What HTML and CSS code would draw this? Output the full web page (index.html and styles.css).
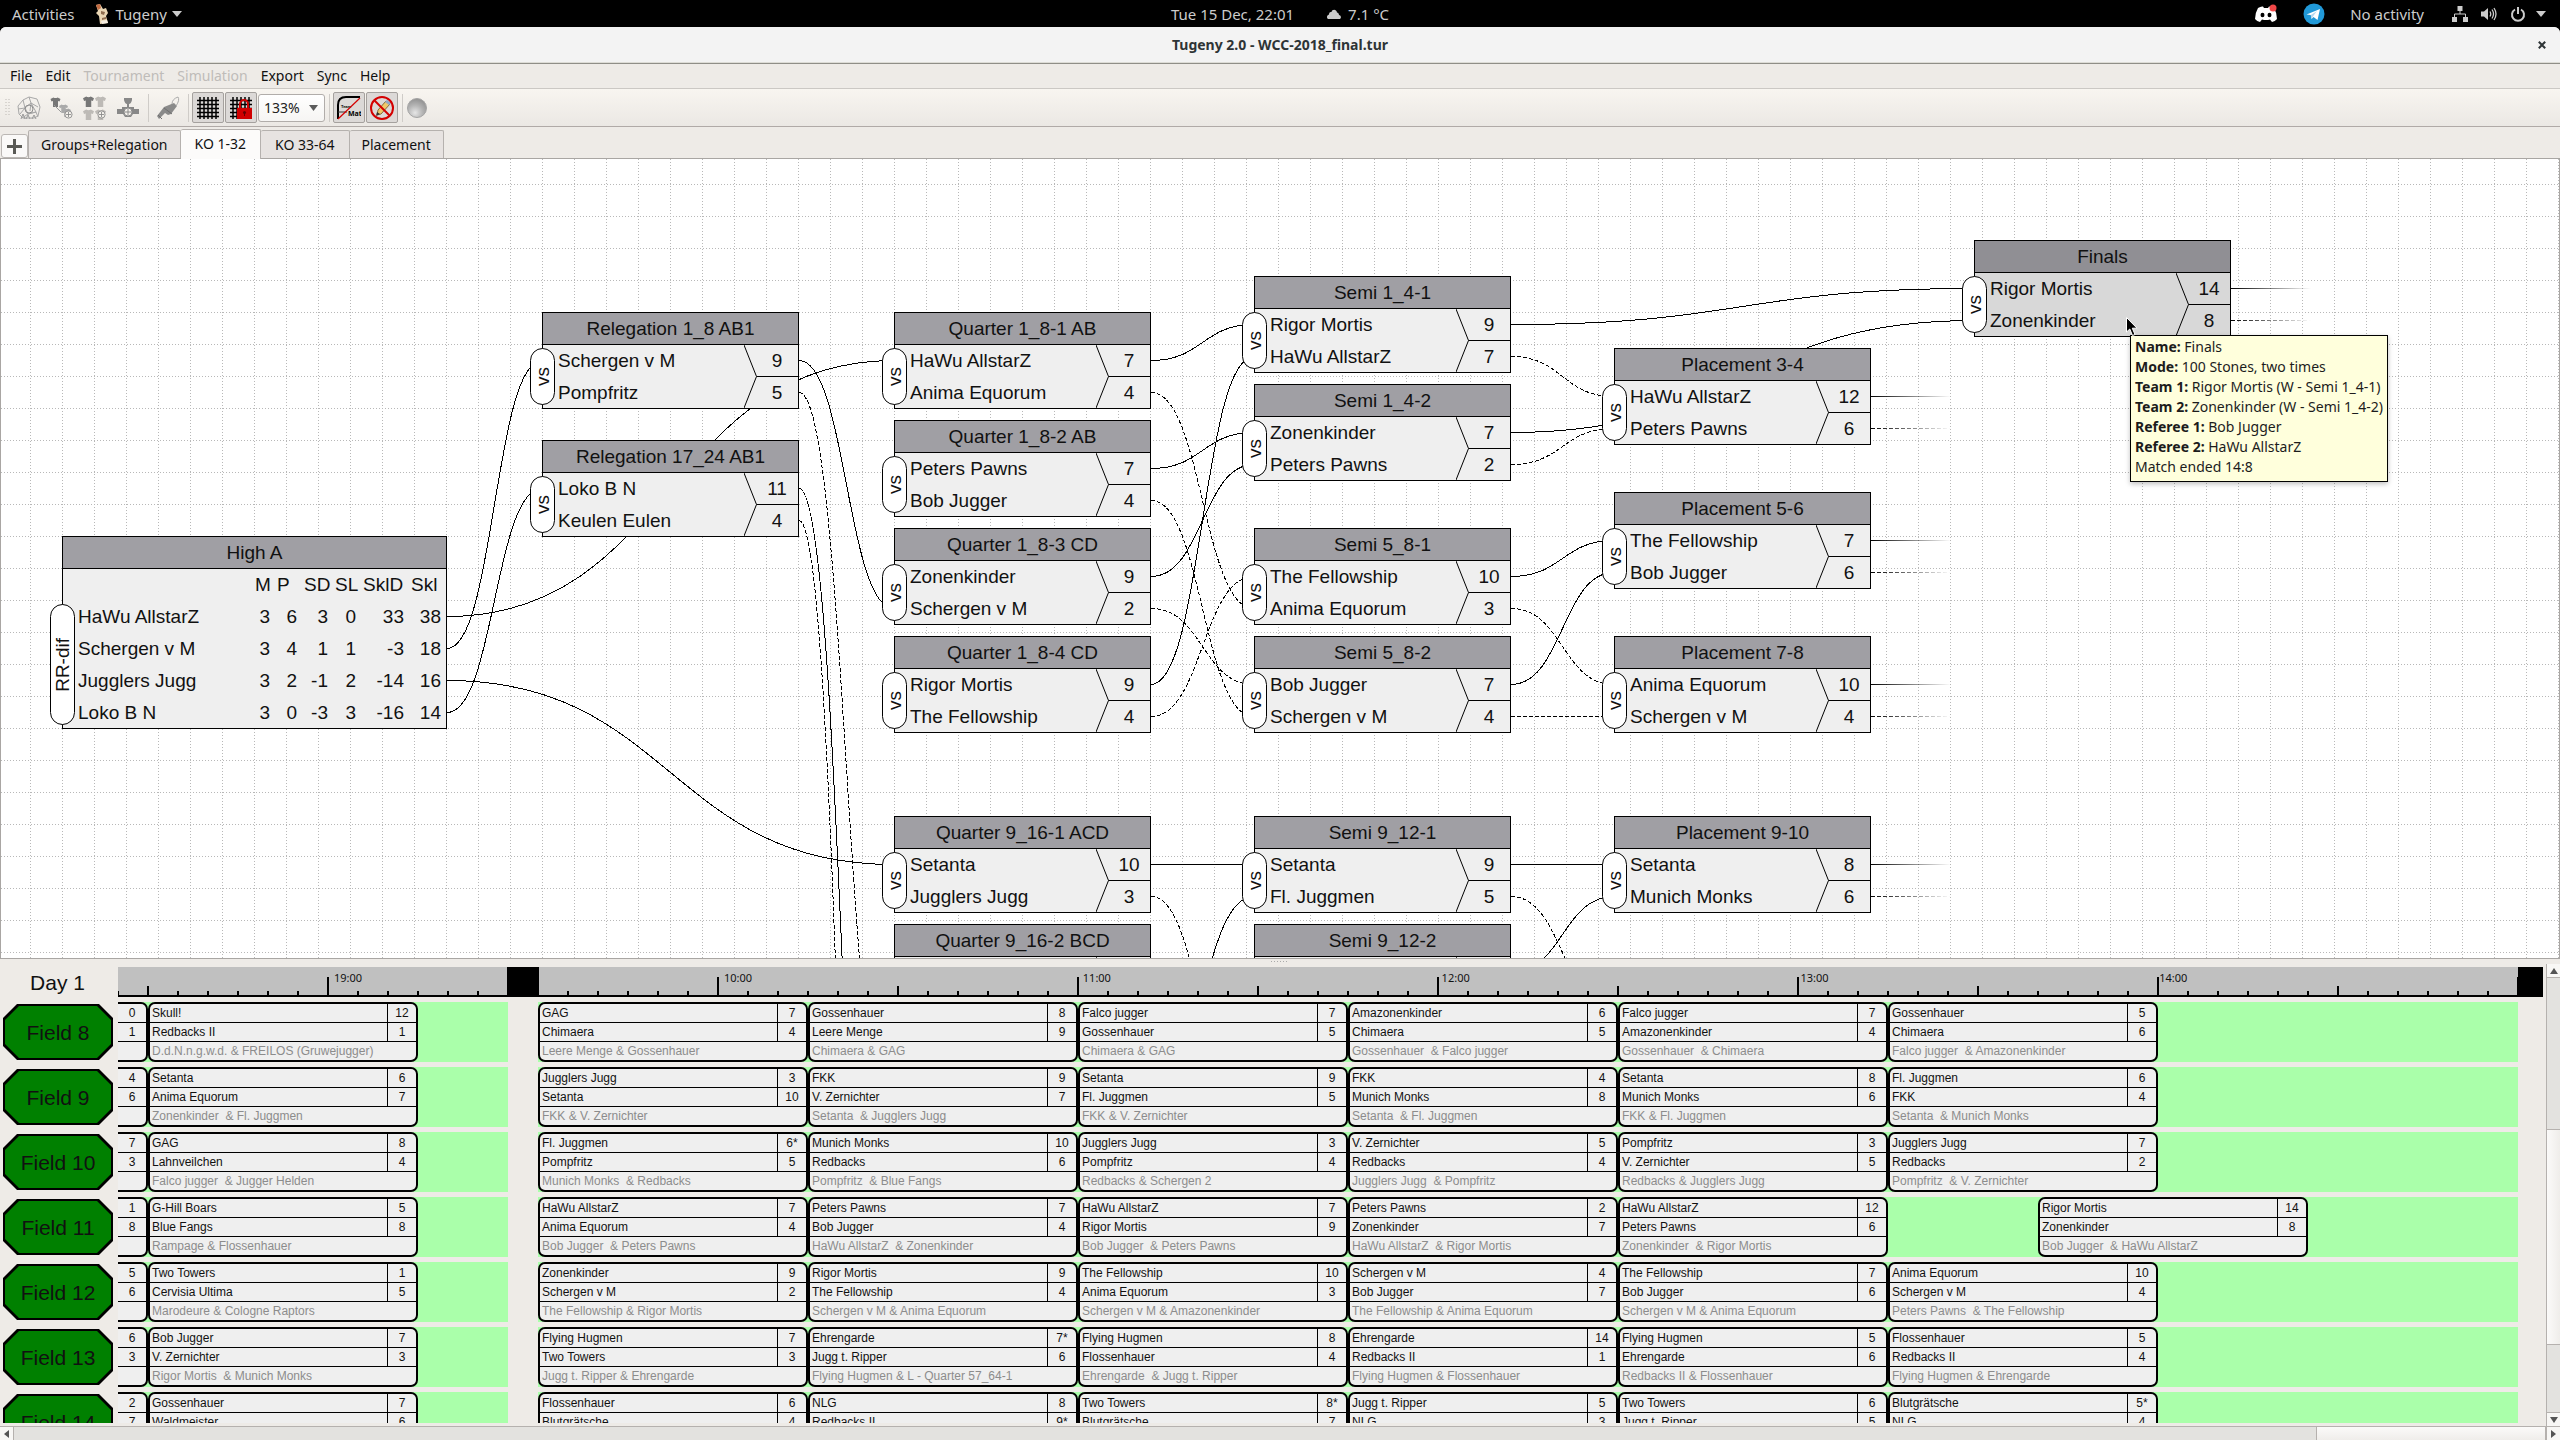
FILE: index.html
```
<!DOCTYPE html>
<html lang="en">
<head>
<meta charset="utf-8">
<title>Tugeny 2.0 - WCC-2018_final.tur</title>
<link rel="stylesheet" href="styles.css">
</head>
<body>
<svg class="defs" width="0" height="0" aria-hidden="true">
  <symbol id="shirt" viewBox="0 0 12 12"><path d="M3.5 0.5 Q6 2 8.500 .5 L12 2.500 10.800 5.500 9 4.800V12H3V4.800L1.200 5.500 0 2.500Z"/></symbol>
  <symbol id="plus-badge" viewBox="0 0 10 10"><circle cx="5" cy="5" r="4" fill="#f4f1ec" stroke="#8c8c8c"/><path d="M5 2v6M2 5h6" stroke="#8c8c8c" fill="none"/></symbol>
  <symbol id="mesh" viewBox="0 0 24 24"><path d="M1 4.500H23M1 8.500H23M1 12.500H23M1 16.500H23M1 20.500H23M4 1V23M8 1V23M12 1V23M16 1V23M20 1V23" stroke="#000" stroke-width="1.500" fill="none"/></symbol>
</svg>

<header class="shell">
  <div class="shell-left">
    <button class="shell-item">Activities</button>
    <button class="shell-item shell-app">
      <svg width="16" height="24" viewBox="0 0 16 24" aria-hidden="true"><path d="M1 3l4-1 3 5 3-1 2 5-2 3 2 7-8 1-1-8-3-3 2-2z" fill="#e9d6b4"/><path d="M1 3l4-1 1 4-3 2z" fill="#c26b42"/><path d="M6 9l4 1-1 3-3-1zM7 16l4-1v2l-4 1z" fill="#8f6d50"/><path d="M6 19l6-1 1 3-6 1z" fill="#f5ede0"/></svg>
      Tugeny
      <svg width="10" height="6" viewBox="0 0 10 6" aria-hidden="true"><path d="M0 0h10L5 6z" fill="#ccc"/></svg>
    </button>
  </div>
  <div class="shell-mid">
    <span>Tue 15 Dec, 22:01</span>
    <span class="weather"><svg width="16" height="12" viewBox="0 0 16 12" aria-hidden="true"><path d="M2 11a2.500 2.500 0 0 1 1-4.500C3 4 5 4 5.500 4 6 1 10.500 1 11 4.500 13 5 13 7 13 7a2.200 2.200 0 0 1 1 4z" fill="#ccc"/></svg>7.1 °C</span>
  </div>
  <div class="shell-right">
    <svg class="discord" width="24" height="24" viewBox="0 0 24 24" aria-label="Discord"><path d="M4 6q3-2 5-1.500L10 6h4l1-1.500q3 0 5 1.500 3 5 3 11-2 2.500-5 3l-2-2.500q-4 1-8 0L6 20q-3-.5-5-3 0-6 3-11z" fill="#fff"/><ellipse cx="8.500" cy="13" rx="2" ry="2.300"/><ellipse cx="15.500" cy="13" rx="2" ry="2.300"/><circle cx="19" cy="6" r="3.500" fill="#f04747"/></svg>
    <svg class="telegram" width="22" height="22" viewBox="0 0 22 22" aria-label="Telegram"><circle cx="11" cy="11" r="10.500" fill="#2199d8"/><path d="M3.500 11.500L17 6l-2.500 11-4-3-2 2-.7-4z" fill="#fff"/><path d="M7.800 12L14 8l-4.500 6-1 2z" fill="#b5d8ee"/></svg>
    <span class="activity">No activity</span>
    <svg class="sys" width="16" height="16" viewBox="0 0 16 16" aria-label="Network"><path d="M5.500 0h5v5h-5zM0 11h5v5H0zM11 11h5v5h-5z" fill="#ccc"/><path d="M8 5v3M2.500 11V8h11v3" stroke="#ccc" fill="none"/></svg>
    <svg class="sys" width="16" height="16" viewBox="0 0 16 16" aria-label="Volume"><path d="M0 5.500h3L7 2v12L3 10.500H0z" fill="#ccc"/><path d="M9 5.500q1.500 2.500 0 5M11 3.500q3 4.500 0 9M13 2q4 6 0 12" stroke="#ccc" stroke-width="1.300" fill="none"/></svg>
    <svg class="sys" width="16" height="16" viewBox="0 0 16 16" aria-label="Power"><path d="M5 3.500a6 6 0 1 0 6 0M8 1v7" stroke="#ccc" stroke-width="2" fill="none"/></svg>
    <svg class="sys-arrow" width="10" height="6" viewBox="0 0 10 6" aria-hidden="true"><path d="M0 0h10L5 6z" fill="#ccc"/></svg>
  </div>
</header>

<div class="window">
  <div class="titlebar">
    <h1>Tugeny 2.0 - WCC-2018_final.tur</h1>
    <button class="close" aria-label="Close"><svg width="8" height="8" viewBox="0 0 8 8"><path d="M.8.8l6.400 6.400M7.200.8L.8 7.200" stroke="#2e3436" stroke-width="2"/></svg></button>
  </div>
  <nav class="menubar">
    <button>File</button><button>Edit</button><button disabled>Tournament</button><button disabled>Simulation</button><button>Export</button><button>Sync</button><button>Help</button>
  </nav>

  <div class="toolbar">
    <svg class="handle" width="7" height="18" viewBox="0 0 7 18" aria-hidden="true"><path d="M1 0v18M4 0v18" stroke="#bdb9b4" stroke-dasharray="1 2"/></svg>
    <button class="tool" aria-label="Tournament graph"><svg width="24" height="24" viewBox="0 0 24 24" fill="none" stroke="#a8a8a8"><path d="M12 1l8 2 3 8-2 9-4 2H6l-4-4-1-8 5-6zM12 1l2 6 7 4M6 4l2 8-7 1M8 12l6-5 5 9-8 2zM5 22l6-4 8-2 2 5M3 18l5-6M14 7l-1 8"/><circle cx="12" cy="13" r="4" stroke="#8c8c8c"/><path d="M4 23l2-5 2 5M9 23l2-4 2 4M15 23l2-4 2 4" stroke="#999"/></svg></button>
    <button class="tool" aria-label="Add ranked teams"><svg width="24" height="24" viewBox="0 0 24 24" fill="#777"><use href="#shirt" width="11" height="10" x="0" y="1"/><g fill="#aaa"><use href="#shirt" width="9" height="9" x="9" y="8"/><use href="#shirt" width="9" height="9" x="12" y="12"/></g><path d="M4 9l7 7" stroke="#999"/><use href="#plus-badge" width="9" height="9" x="14" y="14"/></svg></button>
    <button class="tool" aria-label="Add group"><svg width="24" height="24" viewBox="0 0 24 24"><use href="#shirt" width="11" height="11" x="0" y="0" fill="#777"/><g fill="#bdbab6"><use href="#shirt" width="11" height="11" x="12" y="0"/><use href="#shirt" width="11" height="11" x="0" y="13"/><use href="#shirt" width="11" height="11" x="12" y="13"/></g><use href="#plus-badge" width="9" height="9" x="14" y="14"/></svg></button>
    <button class="tool" aria-label="Add match"><svg width="24" height="24" viewBox="0 0 24 24"><path d="M8 2h8v2q-1 4-3 4v3h5v2h5v5h-6l-2 3H9l-2-3H1v-5h5v-2h5V8Q9 8 8 4z" fill="#888"/><use href="#plus-badge" width="10" height="10" x="7" y="11"/></svg></button>
    <span class="sep"></span>
    <button class="tool" aria-label="Referees"><svg width="24" height="24" viewBox="0 0 24 24"><path d="M1 20l7-9 10-4 3 3-6 8-3 1-3-2-6 6z" fill="#8a8a8a"/><path d="M2 19l4 4M8 12l8 6" stroke="#6f6f6f"/><path d="M16 8q0-5 6-7 2 3-2 9" stroke="#aaa" fill="none"/></svg></button>
    <span class="sep"></span>
    <button class="tool on" aria-label="Show grid"><svg width="24" height="24"><use href="#mesh"/></svg></button>
    <button class="tool on" aria-label="Snap to grid"><svg width="24" height="24" viewBox="0 0 24 24"><use href="#mesh" width="24" height="24"/><path d="M11 12V8a4 4 0 0 1 8 0v4" stroke="#c00" stroke-width="2" fill="none"/><rect x="8" y="12" width="15" height="11" fill="#d00000"/><circle cx="15.500" cy="16.500" r="1.500" fill="#600"/><path d="M15.500 16v4" stroke="#600"/></svg></button>
    <div class="zoom"><select aria-label="Zoom"><option>133%</option></select><svg width="9" height="6" viewBox="0 0 9 6" aria-hidden="true"><path d="M0 0h9L4.500 6z" fill="#5c5c5c"/></svg></div>
    <span class="sep"></span>
    <button class="tool on" aria-label="Match names"><svg width="24" height="24" viewBox="0 0 24 24"><path d="M1 23V9q0-8 8-8h14" stroke="#000" stroke-width="2" fill="none"/><path d="M1 16h9" stroke="#333"/><text x="4" y="12" class="ico-team">Team</text><text x="11" y="20" class="ico-mat">Mat</text><path d="M1 23L23 2" stroke="#d40000" stroke-width="1.200"/></svg></button>
    <button class="tool on" aria-label="Lock editing"><svg width="24" height="24" viewBox="0 0 24 24"><path d="M7 19l1-5 8-9 4 3-9 10z" fill="#f0c869" stroke="#8a6d3b"/><path d="M15 6l2-2 4 3-2 2z" fill="#8fa8c8"/><path d="M6 20l1-4 3 2z" fill="#333"/><circle cx="12" cy="12" r="11" stroke="#d40000" stroke-width="2" fill="none"/><path d="M4 4l16 16" stroke="#d40000" stroke-width="2"/></svg></button>
    <span class="sep"></span>
    <button class="tool ball" aria-label="Sync state"><svg width="20" height="20" viewBox="0 0 20 20"><defs><radialGradient id="bg" cx=".4" cy=".75" r=".8"><stop offset="0" stop-color="#e6e6e6"/><stop offset=".5" stop-color="#b4b4b4"/><stop offset="1" stop-color="#8c8c8c"/></radialGradient></defs><circle cx="10" cy="10" r="9.500" fill="url(#bg)" stroke="#a5a5a5"/></svg></button>
  </div>

  <div class="tabs" role="tablist">
    <button class="add" aria-label="Add tab"><svg width="15" height="15" viewBox="0 0 15 15"><path d="M7.500 0v15M0 7.500h15" stroke="#5a5a55" stroke-width="3"/></svg></button>
    <button class="tab" role="tab">Groups+Relegation</button>
    <button class="tab short current" role="tab" aria-selected="true">KO 1-32</button>
    <button class="tab short" role="tab">KO 33-64</button>
    <button class="tab" role="tab">Placement</button>
  </div>

  <main class="canvas" id="canvas">
    <svg class="wires" aria-hidden="true">
      <defs>
        <pattern id="gh" width="3" height="32" patternUnits="userSpaceOnUse" y="24"><rect y="1" width="1" height="1" fill="#b8b8b8"/></pattern>
        <pattern id="gv" width="32" height="3" patternUnits="userSpaceOnUse" x="29"><rect width="1" height="1" fill="#b8b8b8"/></pattern>
        <linearGradient id="f1" gradientUnits="userSpaceOnUse" x1="1871" x2="1951" y1="0" y2="0"><stop stop-color="#000"/><stop offset="1" stop-color="#000" stop-opacity="0"/></linearGradient>
        <linearGradient id="f2" gradientUnits="userSpaceOnUse" x1="2231" x2="2311" y1="0" y2="0"><stop stop-color="#000"/><stop offset="1" stop-color="#000" stop-opacity="0"/></linearGradient>
      </defs>
      <rect width="100%" height="100%" fill="url(#gh)"/>
      <rect width="100%" height="100%" fill="url(#gv)"/>
      <g id="wires" transform="translate(-1 -159)"></g>
    </svg>
    <section class="group node">
      <h2>High A</h2>
      <table>
        <colgroup><col><col class="c-m"><col class="c-p"><col class="c-sd"><col class="c-sl"><col class="c-skld"><col class="c-skl"></colgroup>
        <thead><tr><th></th><th>M</th><th>P</th><th>SD</th><th>SL</th><th>SklD</th><th>Skl</th></tr></thead>
        <tbody>
          <tr><td>HaWu AllstarZ</td><td>3</td><td>6</td><td>3</td><td>0</td><td>33</td><td>38</td></tr>
          <tr><td>Schergen v M</td><td>3</td><td>4</td><td>1</td><td>1</td><td>-3</td><td>18</td></tr>
          <tr><td>Jugglers Jugg</td><td>3</td><td>2</td><td>-1</td><td>2</td><td>-14</td><td>16</td></tr>
          <tr><td>Loko B N</td><td>3</td><td>0</td><td>-3</td><td>3</td><td>-16</td><td>14</td></tr>
        </tbody>
      </table>
      <span class="pill"><span>RR-dif</span></span>
    </section>
    <div class="tooltip" role="tooltip">
      <p><b>Name:</b> Finals</p>
      <p><b>Mode:</b> 100 Stones, two times</p>
      <p><b>Team 1:</b> Rigor Mortis (W - Semi 1_4-1)</p>
      <p><b>Team 2:</b> Zonenkinder (W - Semi 1_4-2)</p>
      <p><b>Referee 1:</b> Bob Jugger</p>
      <p><b>Referee 2:</b> HaWu AllstarZ</p>
      <p>Match ended 14:8</p>
    </div>
    <svg class="cursor" width="13" height="20" viewBox="0 0 13 20" aria-hidden="true"><path d="M.5.5v14.500l3.300-3 2.700 6.500 2.500-1-2.700-6.300h4.700z" fill="#000" stroke="#fff"/></svg>
  </main>

  <div class="splitter"><i></i></div>

  <section class="schedule">
    <div class="plan">
      <div class="head">
        <div class="day">Day 1</div>
        <div class="ruler">
          <div class="scale scale-a"><time>19:00</time></div>
          <div class="break"></div>
          <div class="scale scale-b"><time>10:00</time><time>11:00</time><time>12:00</time><time>13:00</time><time>14:00</time></div>
          <div class="end"></div>
        </div>
      </div>
      <div class="fields" id="fields"></div>
    </div>
    <div class="vbar">
      <button aria-label="Scroll up"><svg width="8" height="6" viewBox="0 0 8 6"><path d="M0 6h8L4 0z" fill="#555"/></svg></button>
      <div class="groove"><div class="thumb"></div></div>
      <button aria-label="Scroll down"><svg width="8" height="6" viewBox="0 0 8 6"><path d="M0 0h8L4 6z" fill="#555"/></svg></button>
    </div>
  </section>
  <div class="hbar">
    <button aria-label="Scroll left"><svg width="5" height="8" viewBox="0 0 5 8"><path d="M5 0v8L0 4z" fill="#555"/></svg></button>
    <div class="groove"><div class="thumb"></div></div>
    <button aria-label="Scroll right"><svg width="5" height="8" viewBox="0 0 5 8"><path d="M0 0v8l5-4z" fill="#555"/></svg></button>
  </div>
</div>
<script src="app.js"></script>
</body>
</html>
```
FILE: styles.css
```
* { box-sizing: border-box; }
body {
  margin: 0;
  height: 100vh;
  display: flex;
  flex-direction: column;
  overflow: hidden;
  background: #000;
  color: #111;
  font: 14px/20px "Noto Sans", sans-serif;
}
button { font: inherit; color: inherit; border: 0; padding: 0; background: none; }
svg { display: block; flex: none; }
h1, h2, p { margin: 0; }
.defs { position: absolute; }

/* desktop shell bar */
.shell {
  display: grid;
  grid-template-columns: 1fr auto 1fr;
  align-items: center;
  height: 27px;
  color: #ccc;
  font-size: 15px;
}
.shell-left, .shell-mid, .shell-right, .shell-app, .weather { display: flex; align-items: center; }
.shell-left { padding-left: 12px; gap: 20px; }
.shell-app { gap: 5px; }
.shell-mid { gap: 32px; }
.weather { gap: 6px; }
.shell-right { justify-content: flex-end; padding-right: 14px; }
.discord { margin-right: 25px; }
.telegram { margin-right: 25px; }
.activity { margin-right: 28px; }
.sys { margin-right: 13px; }
.sys-arrow { margin-left: -3px; }

/* window frame */
.window {
  flex: 1;
  min-height: 0;
  display: flex;
  flex-direction: column;
  background: #eeebe7;
  border-radius: 6px 6px 0 0;
  overflow: hidden;
}
.titlebar {
  display: grid;
  grid-template-columns: 1fr auto 1fr;
  align-items: center;
  height: 37px;
  background: #f3f3f3;
  border-bottom: 1px solid #8f8e87;
  box-shadow: inset 0 -1px #dddcd6;
  padding-bottom: 1px;
}
.titlebar h1 { grid-column: 2; font-size: 14px; font-weight: 700; color: #2e3436; }
.close { justify-self: end; margin-right: 14px; }

.menubar { display: flex; gap: 13px; height: 25px; padding: 2px 10px; border-bottom: 1px solid #cbc8c4; }
.menubar button:disabled { color: #bfbcb9; }

.toolbar {
  display: flex;
  align-items: center;
  gap: 1px;
  height: 38px;
  padding: 0 5px;
  background: linear-gradient(#f8f5f0, #ebe8e4);
  border-bottom: 1px solid #b0aaa7;
}
.tool { display: grid; place-items: center; width: 32px; height: 31px; border: 1px solid transparent; border-radius: 2px; }
.tool.on { background: #dcd9d7; border-color: #a5a19e; }
.tool.ball { width: 20px; }
.sep { width: 6px; height: 28px; background: linear-gradient(#cfccc8, #cfccc8) center / 1px 100% no-repeat; }
.ico-team { font: bold 4px "Liberation Sans", sans-serif; }
.ico-mat { font: bold 7px "Noto Sans", sans-serif; }
.zoom { display: grid; align-items: center; }
.zoom > * { grid-area: 1 / 1; }
.zoom svg { justify-self: end; margin-right: 7px; pointer-events: none; }
.zoom select {
  appearance: none;
  width: 67px;
  height: 28px;
  padding: 0 5px;
  border: 1px solid #b1adaa;
  border-radius: 3px;
  background: linear-gradient(#fff, #f6f5f3);
  color: #222;
  font: inherit;
}

.tabs { display: flex; align-items: flex-end; height: 31px; padding-left: 1px; }
.add { display: grid; place-items: center; width: 27px; height: 24px; border: 1px solid #bbb7b4; border-radius: 3px; background: #faf9f8; }
.tab {
  height: 28px;
  padding: 1px 12px 0;
  border: 1px solid #b5b1ae;
  border-left-width: 0;
  border-bottom: 0;
  border-radius: 2px 2px 0 0;
  background: #e7e3e1;
}
.tab.short { padding: 1px 14px 0; }
.add + .tab { border-left-width: 1px; }
.tab.current { height: 30px; padding-bottom: 2px; background: #fcfbfa; margin-bottom: -1px; z-index: 1; }

.canvas {
  position: relative;
  flex: 1;
  min-height: 0;
  overflow: hidden;
  background: #fff;
  border: 1px solid #a9a6a3;
  font: 19px/32px "Liberation Sans", Arial, sans-serif;
}
.wires { width: 100%; height: 100%; }
.wires path { fill: none; stroke: #000; shape-rendering: crispEdges; }
.wires .lose { stroke-dasharray: 4 2; }
.node { position: absolute; width: 257px; border: 1px solid #000; background: #efefef; }
.node h2 { height: 32px; background: #a09fa4; border-bottom: 1px solid #000; font: inherit; text-align: center; }
.node.hot { background: #d8d8d8; }
.node.hot h2 { background: #908f94; }
.body { display: grid; grid-template-columns: 1fr 54px; height: 63px; }
.notch { grid-area: 1 / 2; }
.notch path { fill: none; stroke: #000; }
.teams { grid-area: 1 / 1; padding-left: 15px; white-space: nowrap; }
.points { grid-area: 1 / 2; padding-left: 12px; text-align: center; }
.teams div, .points div { height: 31px; line-height: 31px; }
.teams div + div, .points div + div { height: 32px; line-height: 33px; }
.pill {
  position: absolute;
  left: -13px;
  bottom: 3px;
  display: grid;
  place-items: center;
  width: 25px;
  height: 57px;
  border: 1px solid #000;
  border-radius: 13px;
  background: #fff;
}
.pill span { writing-mode: vertical-rl; transform: rotate(180deg); line-height: 23px; }
.group { left: 61px; top: 377px; width: 385px; height: 193px; }
.group .pill { height: 121px; }
.group table { width: 363px; margin-left: 15px; border-collapse: collapse; table-layout: fixed; }
.group th, .group td { height: 32px; padding: 0; font-weight: 400; white-space: nowrap; text-align: right; }
.group th { text-align: left; padding-left: 7px; }
.group th:nth-child(2) { padding-left: 1px; }
.group td:first-child { text-align: left; }
.c-m { width: 16px; }
.c-p { width: 27px; }
.c-sd { width: 31px; }
.c-sl { width: 28px; }
.c-skld { width: 48px; }
.c-skl { width: 37px; }
.tooltip {
  position: absolute;
  left: 2129px;
  top: 176px;
  z-index: 2;
  padding: 1px 4px 4px;
  border: 1px solid #000;
  background: #ffffdc;
  box-shadow: 0 2px 5px rgba(0, 0, 0, .25);
  color: #1c1c1c;
  font: 14px/20px "Noto Sans", sans-serif;
  white-space: nowrap;
}
.cursor { position: absolute; left: 2125px; top: 158px; z-index: 3; }

.splitter { height: 5px; }
.splitter i { display: block; width: 18px; height: 1px; margin: 2px auto 0; background: repeating-linear-gradient(90deg, #aaa 0 1px, transparent 1px 3px); }

/* schedule */
.schedule { display: flex; gap: 3px; font-family: "Liberation Sans", Arial, sans-serif; }
.plan { flex: 1; min-width: 0; padding: 3px 0; overflow: hidden; }
.head { display: flex; height: 30px; margin-bottom: 5px; }
.day { flex: none; width: 118px; padding-right: 3px; font-size: 21px; line-height: 32px; text-align: center; }
.ruler { flex: 1; display: flex; background: #c0c0c0; border-bottom: 2px solid #000; }
.scale {
  display: flex;
  flex: none;
  background-repeat: repeat-x;
  background-image: linear-gradient(90deg, #000 2px, transparent 2px), linear-gradient(90deg, #000 2px, transparent 2px), linear-gradient(90deg, #000 2px, transparent 2px);
  background-size: 30px 4px, 180px 9px, 360px 18px;
}
.scale-a { width: 390px; padding-left: 216px; background-position: -1px 100%, 29px 100%, 209px 100%; }
.scale-b { width: 1980px; padding-left: 186px; background-position: -1px 100%, -1px 100%, 179px 100%; }
.scale time { width: 360px; font: 11px/22px "Noto Sans", sans-serif; }
.scale-a time { width: 60px; }
.break { flex: none; width: 32px; margin: 0 -1px; background: #000; z-index: 1; }
.end { flex: 1; background: #000; }

.fields { display: grid; gap: 5px; align-content: start; height: 421px; overflow: hidden; }
.row { display: flex; height: 60px; }
.field-cell { flex: none; width: 118px; padding: 2px 3px; }
.field {
  --oct: polygon(14px 0, calc(100% - 14px) 0, 100% 14px, 100% calc(100% - 14px), calc(100% - 14px) 100%, 14px 100%, 0 calc(100% - 14px), 0 14px);
  display: grid;
  width: 110px;
  height: 56px;
  padding: 2px;
  background: #000;
  clip-path: var(--oct);
  font-size: 21px;
}
.field span { display: grid; place-items: center; padding-top: 2px; background: #008000; clip-path: var(--oct); }
.open { display: flex; flex: none; background: #afa; }
.open-a { width: 390px; margin-right: 30px; }
.open-b { width: 1980px; }
.card {
  flex: none;
  display: grid;
  grid-template: 18px 18px 18px / 1fr 28px;
  gap: 1px;
  width: 270px;
  height: 60px;
  border: 2px solid #000;
  border-radius: 7px;
  background: #000;
  overflow: hidden;
  font-size: 12px;
  line-height: 18px;
  white-space: pre;
}
.card > * { background: #efefef; overflow: hidden; }
.card .team, .card .refs { padding-left: 2px; }
.card .pts { text-align: center; }
.card .refs { grid-column: 1 / -1; color: #8c8c8c; }
.card.cut { width: 30px; grid-template-columns: 28px; border-left: 0; border-radius: 0 7px 7px 0; }

/* scroll bars */
.vbar { display: flex; flex-direction: column; width: 14px; border-left: 1px solid #b5b1ae; }
.vbar button, .hbar button { display: grid; place-items: center; width: 13px; height: 13px; background: #f8f7f5; }
.groove { flex: 1; display: flex; background: #e3e2df; }
.vbar .groove { flex-direction: column; border: solid #b5b1ae; border-width: 1px 0; padding-top: 151px; }
.vbar .thumb { height: 216px; border: solid #b5b1ae; border-width: 1px 0; background: linear-gradient(90deg, #fbfaf9, #efedea); }
.hbar { display: flex; height: 14px; border-top: 1px solid #b5b1ae; }
.hbar .groove { justify-content: flex-end; border: solid #b5b1ae; border-width: 0 1px; }
.hbar .thumb { width: 230px; border: solid #b5b1ae; border-width: 0 1px; background: linear-gradient(#fbfaf9, #efedea); }
```
FILE: app.js
```
const COL = { rel: 542, quarter: 894, semi: 1254, place: 1614, final: 1974 };
const ORIGIN = { x: 1, y: 159 };

// column, top, title, team 1, points 1, team 2, points 2
const matches = [
  ['rel', 312, 'Relegation 1_8 AB1', 'Schergen v M', 9, 'Pompfritz', 5],
  ['rel', 440, 'Relegation 17_24 AB1', 'Loko B N', 11, 'Keulen Eulen', 4],
  ['quarter', 312, 'Quarter 1_8-1 AB', 'HaWu AllstarZ', 7, 'Anima Equorum', 4],
  ['quarter', 420, 'Quarter 1_8-2 AB', 'Peters Pawns', 7, 'Bob Jugger', 4],
  ['quarter', 528, 'Quarter 1_8-3 CD', 'Zonenkinder', 9, 'Schergen v M', 2],
  ['quarter', 636, 'Quarter 1_8-4 CD', 'Rigor Mortis', 9, 'The Fellowship', 4],
  ['quarter', 816, 'Quarter 9_16-1 ACD', 'Setanta', 10, 'Jugglers Jugg', 3],
  ['quarter', 924, 'Quarter 9_16-2 BCD', '', '', '', ''],
  ['semi', 276, 'Semi 1_4-1', 'Rigor Mortis', 9, 'HaWu AllstarZ', 7],
  ['semi', 384, 'Semi 1_4-2', 'Zonenkinder', 7, 'Peters Pawns', 2],
  ['semi', 528, 'Semi 5_8-1', 'The Fellowship', 10, 'Anima Equorum', 3],
  ['semi', 636, 'Semi 5_8-2', 'Bob Jugger', 7, 'Schergen v M', 4],
  ['semi', 816, 'Semi 9_12-1', 'Setanta', 9, 'Fl. Juggmen', 5],
  ['semi', 924, 'Semi 9_12-2', '', '', '', ''],
  ['place', 348, 'Placement 3-4', 'HaWu AllstarZ', 12, 'Peters Pawns', 6],
  ['place', 492, 'Placement 5-6', 'The Fellowship', 7, 'Bob Jugger', 6],
  ['place', 636, 'Placement 7-8', 'Anima Equorum', 10, 'Schergen v M', 4],
  ['place', 816, 'Placement 9-10', 'Setanta', 8, 'Munich Monks', 6],
  ['final', 240, 'Finals', 'Rigor Mortis', 14, 'Zonenkinder', 8],
];

// x1, y1, x2, y2, loser link
const links = [
  [447, 616, 894, 360], [447, 648, 542, 360], [447, 680, 894, 864], [447, 712, 542, 488],
  [799, 360, 894, 608], [799, 392, 894, 1144, 1], [799, 488, 894, 1633], [799, 520, 894, 2090, 1],
  [1151, 360, 1254, 324], [1151, 392, 1254, 608, 1], [1151, 468, 1254, 432], [1151, 500, 1254, 716, 1],
  [1151, 576, 1254, 464], [1151, 608, 1254, 684, 1], [1151, 684, 1254, 356], [1151, 716, 1254, 576, 1],
  [1151, 864, 1254, 864], [1151, 896, 1254, 1131, 1], [1151, 1088, 1254, 896],
  [1511, 324, 1974, 288], [1511, 356, 1614, 396, 1], [1511, 432, 1974, 320], [1511, 464, 1614, 428, 1],
  [1511, 576, 1614, 540], [1511, 608, 1614, 684, 1], [1511, 684, 1614, 572], [1511, 716, 1614, 716, 1],
  [1511, 864, 1614, 864], [1511, 896, 1614, 1008, 1], [1511, 972, 1614, 896],
];

let wires = '';
for (const [x1, y1, x2, y2, lose] of links) {
  const m = (x1 + x2) / 2;
  wires += `<path class="${lose ? 'lose' : 'win'}" d="M${x1} ${y1 + .5}C${m} ${y1 + .5} ${m} ${y2 + .5} ${x2} ${y2 + .5}"/>`;
}
for (const [col, top] of matches) {
  if (col !== 'place' && col !== 'final') continue;
  const x = COL[col] + 257, fill = col === 'place' ? 'f1' : 'f2';
  wires += `<path d="M${x} ${top + 48.5}h80" style="stroke:url(#${fill})"/><path class="lose" d="M${x} ${top + 80.5}h80" style="stroke:url(#${fill})"/>`;
}
document.getElementById('wires').innerHTML = wires;

const canvas = document.getElementById('canvas');
canvas.insertAdjacentHTML('beforeend', matches.map(([col, top, title, a, pa, b, pb]) => `
  <section class="node${col === 'final' ? ' hot' : ''}" style="left:${COL[col] - ORIGIN.x}px;top:${top - ORIGIN.y}px">
    <h2>${title}</h2>
    <div class="body">
      <svg class="notch" width="54" height="63" viewBox="0 0 54 63"><path d="M0 0L12.500 31.500L0 63M12.500 31.500H54"/></svg>
      <div class="teams"><div>${a}</div><div>${b}</div></div>
      <div class="points"><div>${pa}</div><div>${pb}</div></div>
    </div>
    ${a ? '<span class="pill"><span>vs</span></span>' : ''}
  </section>`).join(''));

// name, points of the cut-off match, evening match, morning matches
const fields = [
  ['Field 8', '0|1', 'Skull!|12|Redbacks II|1|D.d.N.n.g.w.d. & FREILOS (Gruwejugger)',
    ['GAG|7|Chimaera|4|Leere Menge & Gossenhauer', 'Gossenhauer|8|Leere Menge|9|Chimaera & GAG', 'Falco jugger|7|Gossenhauer|5|Chimaera & GAG', 'Amazonenkinder|6|Chimaera|5|Gossenhauer  & Falco jugger', 'Falco jugger|7|Amazonenkinder|4|Gossenhauer  & Chimaera', 'Gossenhauer|5|Chimaera|6|Falco jugger  & Amazonenkinder']],
  ['Field 9', '4|6', 'Setanta|6|Anima Equorum|7|Zonenkinder  & Fl. Juggmen',
    ['Jugglers Jugg|3|Setanta|10|FKK & V. Zernichter', 'FKK|9|V. Zernichter|7|Setanta  & Jugglers Jugg', 'Setanta|9|Fl. Juggmen|5|FKK & V. Zernichter', 'FKK|4|Munich Monks|8|Setanta  & Fl. Juggmen', 'Setanta|8|Munich Monks|6|FKK & Fl. Juggmen', 'Fl. Juggmen|6|FKK|4|Setanta  & Munich Monks']],
  ['Field 10', '7|3', 'GAG|8|Lahnveilchen|4|Falco jugger  & Jugger Helden',
    ['Fl. Juggmen|6*|Pompfritz|5|Munich Monks  & Redbacks', 'Munich Monks|10|Redbacks|6|Pompfritz  & Blue Fangs', 'Jugglers Jugg|3|Pompfritz|4|Redbacks & Schergen 2', 'V. Zernichter|5|Redbacks|4|Jugglers Jugg  & Pompfritz', 'Pompfritz|3|V. Zernichter|5|Redbacks & Jugglers Jugg', 'Jugglers Jugg|7|Redbacks|2|Pompfritz  & V. Zernichter']],
  ['Field 11', '1|8', 'G-Hill Boars|5|Blue Fangs|8|Rampage & Flossenhauer',
    ['HaWu AllstarZ|7|Anima Equorum|4|Bob Jugger  & Peters Pawns', 'Peters Pawns|7|Bob Jugger|4|HaWu AllstarZ  & Zonenkinder', 'HaWu AllstarZ|7|Rigor Mortis|9|Bob Jugger  & Peters Pawns', 'Peters Pawns|2|Zonenkinder|7|HaWu AllstarZ  & Rigor Mortis', 'HaWu AllstarZ|12|Peters Pawns|6|Zonenkinder  & Rigor Mortis', 'Rigor Mortis|14|Zonenkinder|8|Bob Jugger  & HaWu AllstarZ|25']],
  ['Field 12', '5|6', 'Two Towers|1|Cervisia Ultima|5|Marodeure & Cologne Raptors',
    ['Zonenkinder|9|Schergen v M|2|The Fellowship & Rigor Mortis', 'Rigor Mortis|9|The Fellowship|4|Schergen v M & Anima Equorum', 'The Fellowship|10|Anima Equorum|3|Schergen v M & Amazonenkinder', 'Schergen v M|4|Bob Jugger|7|The Fellowship & Anima Equorum', 'The Fellowship|7|Bob Jugger|6|Schergen v M & Anima Equorum', 'Anima Equorum|10|Schergen v M|4|Peters Pawns  & The Fellowship']],
  ['Field 13', '6|3', 'Bob Jugger|7|V. Zernichter|3|Rigor Mortis  & Munich Monks',
    ['Flying Hugmen|7|Two Towers|3|Jugg t. Ripper & Ehrengarde', 'Ehrengarde|7*|Jugg t. Ripper|6|Flying Hugmen & L - Quarter 57_64-1', 'Flying Hugmen|8|Flossenhauer|4|Ehrengarde  & Jugg t. Ripper', 'Ehrengarde|14|Redbacks II|1|Flying Hugmen & Flossenhauer', 'Flying Hugmen|5|Ehrengarde|6|Redbacks II & Flossenhauer', 'Flossenhauer|5|Redbacks II|4|Flying Hugmen & Ehrengarde']],
  ['Field 14', '2|7', 'Gossenhauer|7|Waldmeister|6|',
    ['Flossenhauer|6|Blutgrätsche|4|', 'NLG|8|Redbacks II|9*|', 'Two Towers|8*|Blutgrätsche|7|', 'Jugg t. Ripper|5|NLG|3|', 'Two Towers|6|Jugg t. Ripper|5|', 'Blutgrätsche|5*|NLG|4|']],
];

const PX_PER_MINUTE = 6;
const card = (text) => {
  const [a, pa, b, pb, refs, wait] = text.replaceAll('&', '&amp;').split('|');
  const gap = wait ? ` style="margin-left:${wait * PX_PER_MINUTE}px"` : '';
  return `<article class="card"${gap}><div class="team">${a}</div><div class="pts">${pa}</div><div class="team">${b}</div><div class="pts">${pb}</div><div class="refs">${refs}</div></article>`;
};
document.getElementById('fields').innerHTML = fields.map(([name, cut, evening, morning]) => {
  const [c1, c2] = cut.split('|');
  return `<div class="row">
    <div class="field-cell"><button class="field"><span>${name}</span></button></div>
    <div class="open open-a"><article class="card cut"><div class="pts">${c1}</div><div class="pts">${c2}</div><div class="refs"></div></article>${card(evening)}</div>
    <div class="open open-b">${morning.map(card).join('')}</div>
  </div>`;
}).join('');
```
